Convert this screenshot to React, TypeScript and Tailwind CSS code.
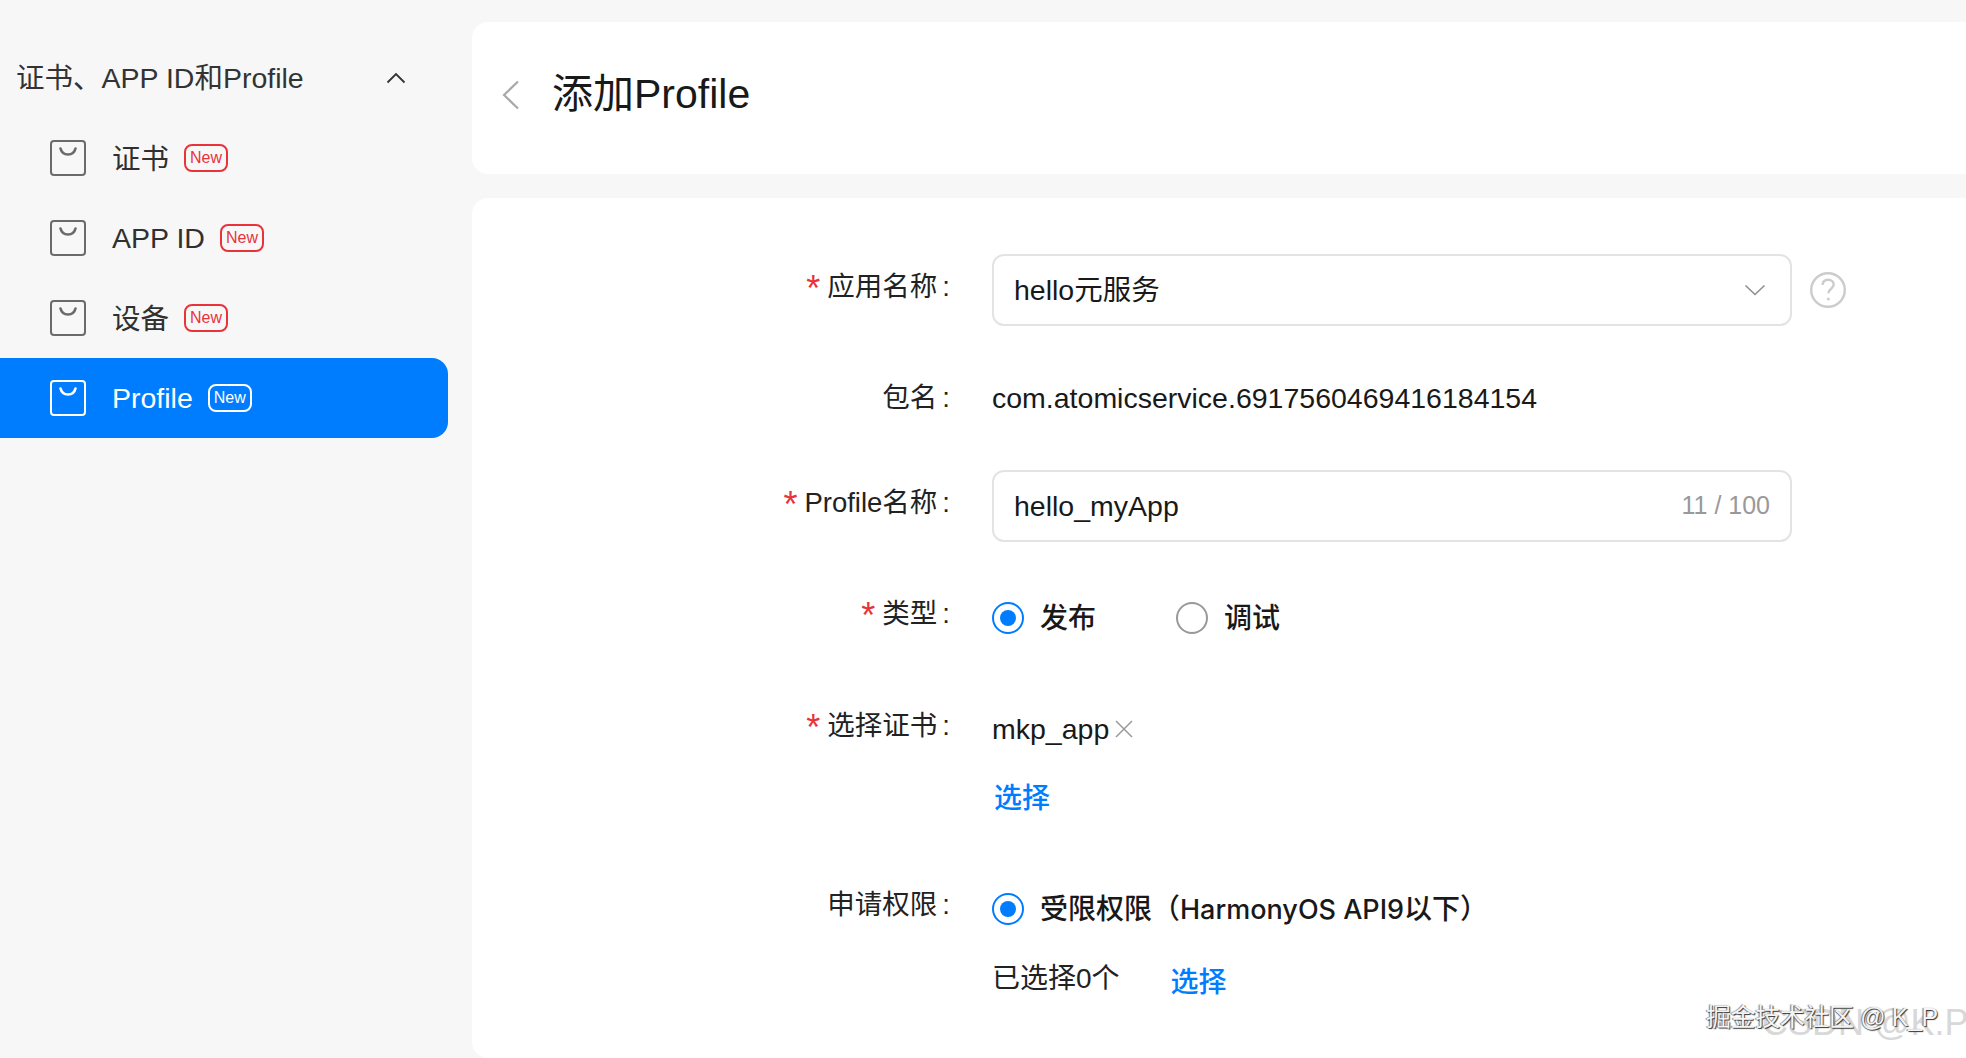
const Bag = ({ active }: { active?: boolean }) => (
  <svg width="36" height="36" viewBox="0 0 36 36" fill="none" stroke={active ? "#ffffff" : "#6b6b6b"} strokeWidth="2">
    <rect x="1" y="1" width="34" height="34" rx="3" />
    <path d="M10.500 8.500c1 4 4 6 7.500 6s6.500-2 7.500-6" strokeWidth="2.600" strokeLinecap="round" />
  </svg>
);

const NewBadge = ({ active }: { active?: boolean }) => (
  <span
    className={`ml-[15px] flex h-[28px] items-center rounded-[8px] border-2 px-[4px] text-[16px] ${
      active ? "border-white text-white" : "border-[#e8333a] text-[#e8333a]"
    }`}
  >
    New
  </span>
);

const NavItem = ({ label, active, latin }: { label: string; active?: boolean; latin?: boolean }) => (
  <div
    className={`flex h-[80px] items-center pl-[50px] ${
      active ? "w-[448px] rounded-r-[16px] bg-[#007dff] text-white" : "text-[#303030]"
    }`}
  >
    <Bag active={active} />
    <span className={latin ? "ml-[26px] text-[28.500px]" : "ml-[26px] pt-[2px] text-[28.500px]"}>{label}</span>
    <NewBadge active={active} />
  </div>
);

const Label = ({ text, required, className }: { text: string; required?: boolean; className?: string }) => (
  <div className={`flex h-[40px] w-[480px] shrink-0 items-center justify-end text-[27.500px] text-[#222222] ${className ?? ""}`}>
    {required && <span className="mr-[7px] mt-[4px] text-[36px] leading-[30px] text-[#e8333a]">*</span>}
    <span>{text}</span>
    <span className="ml-[5px] mr-[2px]">:</span>
  </div>
);

const Radio = ({ children, checked }: { children: React.ReactNode; checked?: boolean }) => (
  <div className="flex items-center">
    <span
      className={`flex h-[32px] w-[32px] items-center justify-center rounded-full border-[2.500px] ${
        checked ? "border-[#007dff]" : "border-[#999999]"
      }`}
    >
      {checked && <span className="h-[16px] w-[16px] rounded-full bg-[#007dff]" />}
    </span>
    <span className="ml-[16px] pt-[2px] text-[28px] font-medium text-[#191919]">{children}</span>
  </div>
);

export default function App() {
  return (
    <div
      className="relative flex h-[1058px] w-[1966px] overflow-hidden bg-[#f7f7f7] text-[#191919]"
      style={{ fontFamily: '"Liberation Sans", "Noto Sans CJK SC", sans-serif' }}
    >
      <aside className="w-[472px] shrink-0 pt-[38px]">
        <div className="flex h-[80px] w-[448px] items-center justify-between pl-[16px] pr-[42px] text-[28.500px] text-[#333333]">
          <span>证书、APP ID和Profile</span>
          <svg width="20" height="12" viewBox="0 0 20 12" fill="none" stroke="#333333" strokeWidth="1.800">
            <path d="M1.500 10.500 10 2l8.500 8.500" />
          </svg>
        </div>
        <NavItem label="证书" />
        <NavItem label="APP ID" latin />
        <NavItem label="设备" />
        <NavItem label="Profile" active latin />
      </aside>

      <main className="flex min-w-0 flex-1 flex-col gap-[24px] pt-[22px]">
        <header className="flex h-[152px] shrink-0 items-center rounded-l-[16px] bg-white pb-[6px] pl-[30px]">
          <svg width="18" height="30" viewBox="0 0 18 30" fill="none" stroke="#a8a8a8" strokeWidth="2.200">
            <path d="M16 1.500 2 15l14 13.500" />
          </svg>
          <h1 className="ml-[32px] text-[41px] font-normal text-[#191919]">添加Profile</h1>
        </header>

        <section className="flex-1 rounded-l-[16px] bg-white pt-[56px]">
          <div className="flex">
            <Label text="应用名称" required className="mt-[13px]" />
            <div className="ml-[40px] flex h-[72px] w-[800px] items-center justify-between rounded-[12px] border-2 border-[#e3e3e3] pl-[20px] pr-[24px] text-[28.500px]">
              <span>hello元服务</span>
              <svg width="22" height="12" viewBox="0 0 22 12" fill="none" stroke="#8f8f8f" strokeWidth="1.600">
                <path d="M1.500 1.500 11 10.500l9.500-9" />
              </svg>
            </div>
            <svg className="ml-[18px] mt-[18px]" width="36" height="36" viewBox="0 0 36 36" fill="none" stroke="#cccccc" strokeWidth="2.400">
              <circle cx="18" cy="18" r="16.800" />
              <path d="M12.500 13c.3-3.300 2.700-5.200 5.700-5.200 3.200 0 5.500 2 5.500 4.800 0 4-5.400 4.300-5.400 8.700" />
              <circle cx="18.300" cy="27" r="1.500" fill="#cccccc" stroke="none" />
            </svg>
          </div>

          <div className="mt-[52px] flex">
            <Label text="包名" />
            <div className="ml-[40px] flex h-[40px] items-center text-[28.500px]">com.atomicservice.6917560469416184154</div>
          </div>

          <div className="mt-[52px] flex">
            <Label text="Profile名称" required className="mt-[13px]" />
            <div className="ml-[40px] flex h-[72px] w-[800px] items-center justify-between rounded-[12px] border-2 border-[#e3e3e3] pl-[20px] pr-[20px] text-[28.500px]">
              <span>hello_myApp</span>
              <span className="text-[25px] text-[#999999]">11 / 100</span>
            </div>
          </div>

          <div className="mt-[56px] flex">
            <Label text="类型" required className="-mt-[4px]" />
            <div className="ml-[40px] flex h-[40px] items-center gap-[80px]">
              <Radio checked>发布</Radio>
              <Radio>调试</Radio>
            </div>
          </div>

          <div className="mt-[71px] flex">
            <Label text="选择证书" required className="-mt-[3px]" />
            <div className="ml-[40px]">
              <div className="flex h-[40px] items-center text-[28.500px]">
                mkp_app
                <svg className="ml-[5px]" width="20" height="20" viewBox="0 0 20 20" fill="none" stroke="#999999" strokeWidth="1.500">
                  <path d="M2 2l16 16M18 2 2 18" />
                </svg>
              </div>
              <div className="ml-[2px] mt-[30px] flex h-[40px] items-center text-[28px] font-medium text-[#007dff]">选择</div>
            </div>
          </div>

          <div className="mt-[70px] flex">
            <Label text="申请权限" className="-mt-[4px]" />
            <div className="ml-[40px]">
              <div className="flex h-[40px] items-center">
                <Radio checked>
                  受限权限（<span className="text-[27px]" style={{ fontFamily: 'Inter, "Noto Sans CJK SC", sans-serif' }}>HarmonyOS API9</span>以下）
                </Radio>
              </div>
              <div className="mt-[30px] flex h-[40px] items-center text-[28px] text-[#222222]">
                已选择0个
                <span className="ml-[51px] mt-[7px] font-medium text-[#007dff]">选择</span>
              </div>
            </div>
          </div>
        </section>
      </main>

      <div className="absolute left-[1762px] top-[1003px] whitespace-nowrap text-[36px] leading-[40px] text-[#d8d8d8]">CSDN @K.P</div>
      <div
        className="absolute left-[1706px] top-[1000px] whitespace-nowrap text-[25px] leading-[34px] tracking-[-0.400px] text-[#f4f4f4]"
        style={{ textShadow: "1px 1px 1px #333333, -1px 0 1px #777777" }}
      >
        掘金技术社区 @ K_P
      </div>
    </div>
  );
}
